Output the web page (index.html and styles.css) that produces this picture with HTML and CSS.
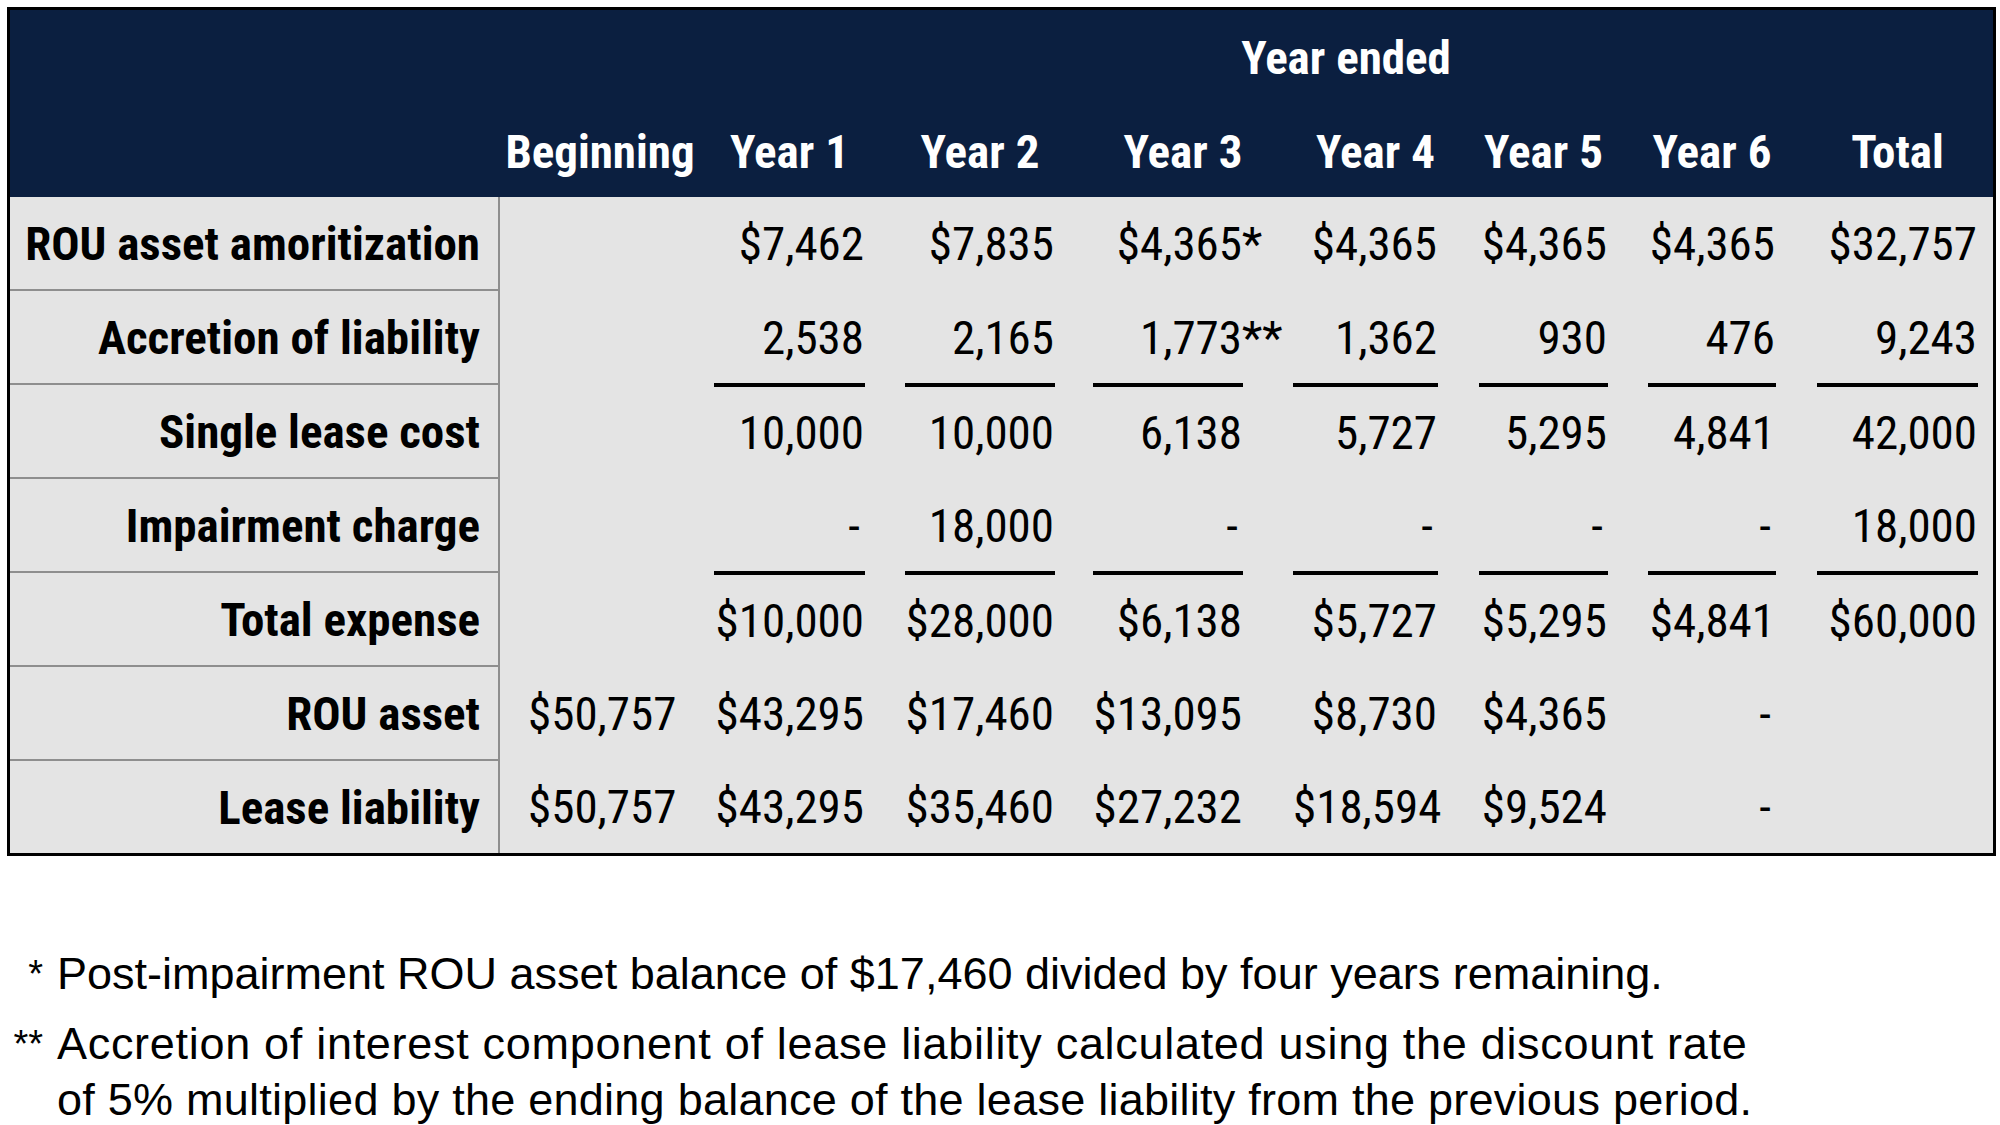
FILE: index.html
```html
<!DOCTYPE html>
<html lang="en">
<head>
<meta charset="utf-8">
<title>Lease cost schedule</title>
<link rel="stylesheet" href="styles.css">
</head>
<body>
<main class="sheet">
  <section class="tbl">
    <div class="grid hrow">
      <div class="yearended">Year ended</div>
    </div>
    <div class="grid hrow">
      <div></div>
      <div class="h">Beginning</div>
      <div class="h">Year 1</div>
      <div class="h">Year 2</div>
      <div class="h h3">Year 3</div>
      <div class="h h4">Year 4</div>
      <div class="h">Year 5</div>
      <div class="h">Year 6</div>
      <div class="h">Total</div>
      <div></div>
    </div>

    <div class="grid row">
      <div class="lbl">ROU asset amoritization</div>
      <div class="c"><span class="v"></span></div>
      <div class="c"><span class="v">$7,462</span></div>
      <div class="c"><span class="v">$7,835</span></div>
      <div class="c"><span class="v">$4,365<span class="ast">*</span></span></div>
      <div class="c"><span class="v">$4,365</span></div>
      <div class="c"><span class="v">$4,365</span></div>
      <div class="c"><span class="v">$4,365</span></div>
      <div class="c"><span class="v">$32,757</span></div>
      <div></div>
    </div>

    <div class="grid row">
      <div class="lbl">Accretion of liability</div>
      <div class="c"><span class="v"></span></div>
      <div class="c"><span class="v">2,538</span></div>
      <div class="c"><span class="v">2,165</span></div>
      <div class="c"><span class="v">1,773<span class="ast">**</span></span></div>
      <div class="c"><span class="v">1,362</span></div>
      <div class="c"><span class="v">930</span></div>
      <div class="c"><span class="v">476</span></div>
      <div class="c"><span class="v">9,243</span></div>
      <div></div>
    </div>

    <div class="grid row ul">
      <div class="lbl">Single lease cost</div>
      <div class="c nol"><span class="v"></span></div>
      <div class="c"><span class="v">10,000</span></div>
      <div class="c"><span class="v">10,000</span></div>
      <div class="c"><span class="v">6,138</span></div>
      <div class="c"><span class="v">5,727</span></div>
      <div class="c"><span class="v">5,295</span></div>
      <div class="c"><span class="v">4,841</span></div>
      <div class="c"><span class="v">42,000</span></div>
      <div></div>
    </div>

    <div class="grid row">
      <div class="lbl">Impairment charge</div>
      <div class="c"><span class="v"></span></div>
      <div class="c"><span class="v dash">-</span></div>
      <div class="c"><span class="v">18,000</span></div>
      <div class="c"><span class="v dash">-</span></div>
      <div class="c"><span class="v dash">-</span></div>
      <div class="c"><span class="v dash">-</span></div>
      <div class="c"><span class="v dash">-</span></div>
      <div class="c"><span class="v">18,000</span></div>
      <div></div>
    </div>

    <div class="grid row ul">
      <div class="lbl">Total expense</div>
      <div class="c nol"><span class="v"></span></div>
      <div class="c"><span class="v">$10,000</span></div>
      <div class="c"><span class="v">$28,000</span></div>
      <div class="c"><span class="v">$6,138</span></div>
      <div class="c"><span class="v">$5,727</span></div>
      <div class="c"><span class="v">$5,295</span></div>
      <div class="c"><span class="v">$4,841</span></div>
      <div class="c"><span class="v">$60,000</span></div>
      <div></div>
    </div>

    <div class="grid row">
      <div class="lbl">ROU asset</div>
      <div class="c"><span class="v">$50,757</span></div>
      <div class="c"><span class="v">$43,295</span></div>
      <div class="c"><span class="v">$17,460</span></div>
      <div class="c"><span class="v">$13,095</span></div>
      <div class="c"><span class="v">$8,730</span></div>
      <div class="c"><span class="v">$4,365</span></div>
      <div class="c"><span class="v dash">-</span></div>
      <div class="c"><span class="v"></span></div>
      <div></div>
    </div>

    <div class="grid row last">
      <div class="lbl">Lease liability</div>
      <div class="c"><span class="v">$50,757</span></div>
      <div class="c"><span class="v">$43,295</span></div>
      <div class="c"><span class="v">$35,460</span></div>
      <div class="c"><span class="v">$27,232</span></div>
      <div class="c"><span class="v">$18,594</span></div>
      <div class="c"><span class="v">$9,524</span></div>
      <div class="c"><span class="v dash">-</span></div>
      <div class="c"><span class="v"></span></div>
      <div></div>
    </div>
  </section>

  <section class="notes">
    <div class="note">
      <span class="mark">*</span>
      <p><span class="line">Post-impairment ROU asset balance of $17,460 divided by four years remaining.</span></p>
    </div>
    <div class="note">
      <span class="mark">**</span>
      <p><span class="line l2">Accretion of interest component of lease liability calculated using the discount rate</span><span class="line l3">of 5% multiplied by the ending balance of the lease liability from the previous period.</span></p>
    </div>
  </section>
</main>
</body>
</html>
```

FILE: styles.css
```css
html, body {
  margin: 0;
  padding: 0;
  background: #ffffff;
}

body {
  font-family: "Liberation Sans", Arial, sans-serif;
  color: #000;
}

.sheet {
  width: 2000px;
  height: 1125px;
  padding: 7px 0 0 7px;
  box-sizing: border-box;
}

.tbl {
  width: 1989px;
  box-sizing: border-box;
  border: 3px solid #000;
  background: #e4e4e4;
  font-family: "Roboto", "Liberation Sans", sans-serif;
  font-stretch: 75%;
}

.grid {
  display: grid;
  grid-template-columns: 490px 172px 193px 190px 188px 195px 170px 168px 202px 15px;
}

.grid > :nth-child(2) { padding-left: 28px; }
.grid > :nth-child(3) { padding-left: 42px; }
.grid > :nth-child(4) { padding-left: 40px; }
.grid > :nth-child(5) { padding-left: 38px; }
.grid > :nth-child(6) { padding-left: 50px; }
.grid > :nth-child(7) { padding-left: 41px; }
.grid > :nth-child(8) { padding-left: 40px; }
.grid > :nth-child(9) { padding-left: 41px; }

.hrow {
  background: #0b1f40;
  color: #fff;
  font-weight: 700;
  font-size: 47px;
  height: 94px;
}
.hrow + .hrow { height: 93px; }

.yearended {
  grid-column: 3 / 10;
  padding-left: 42px;
  text-align: center;
  line-height: 96px;
}

.h {
  display: flex;
  justify-content: center;
  line-height: 96px;
  white-space: nowrap;
}
.h.h3 { padding-left: 68px; }
.h.h4 { padding-left: 70px; }

.row {
  height: 94px;
}
.row.last { height: 92px; }

.lbl {
  box-sizing: border-box;
  border-right: 2px solid #8e8e8e;
  border-bottom: 2px solid #8e8e8e;
  display: flex;
  align-items: center;
  justify-content: flex-end;
  padding-right: 18px;
  font-weight: 700;
  font-size: 47px;
  white-space: nowrap;
}
.row.last .lbl { border-bottom: none; }

.c {
  display: flex;
  box-sizing: border-box;
}

.v {
  flex: 1;
  display: block;
  text-align: right;
  padding-right: 1px;
  font-size: 47px;
  line-height: 94px;
  white-space: nowrap;
}
.row.last .v { line-height: 92px; }

.ul .c .v {
  border-top: 4px solid #000;
  margin-top: -2px;
  line-height: 92px;
}
.ul .c.nol .v {
  border-top: none;
  margin-top: 0;
  line-height: 94px;
}

.dash {
  padding-right: 5px;
}

.ast {
  display: inline-block;
  width: 0;
  white-space: nowrap;
}

.notes {
  margin-top: 90px;
  font-family: "Liberation Sans", Arial, sans-serif;
  font-size: 45px;
  line-height: 56px;
}

.note {
  display: grid;
  grid-template-columns: 36px 1fr;
  column-gap: 14px;
}
.note + .note { margin-top: 14px; }

.mark {
  text-align: right;
  font-size: 38px;
}

.note p {
  margin: 0;
  white-space: nowrap;
}

.line { display: block; }
.line.l2 { letter-spacing: 0.7px; }
.line.l3 { letter-spacing: 0.25px; }
```
